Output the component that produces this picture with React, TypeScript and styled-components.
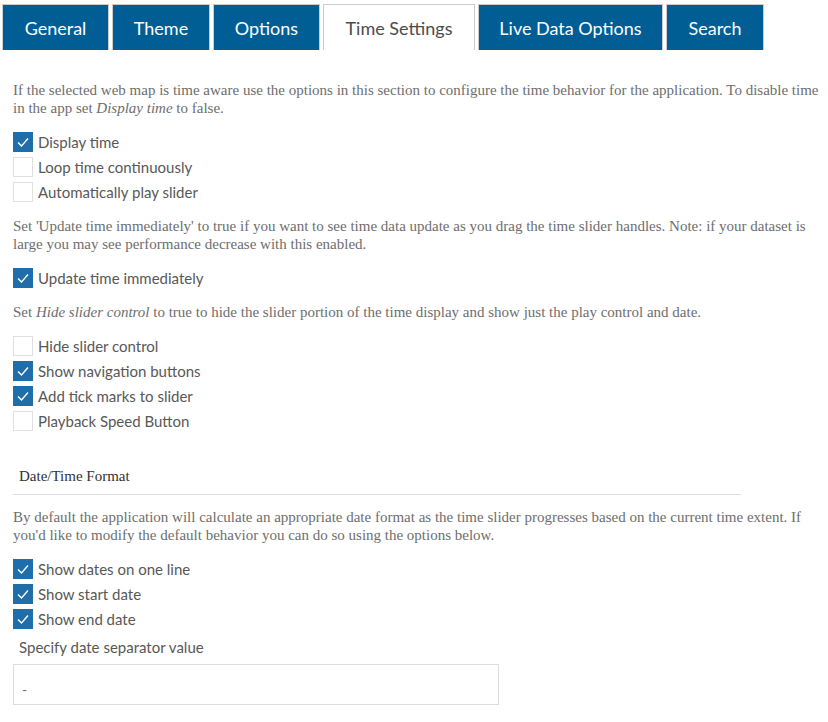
import styled, { createGlobalStyle } from 'styled-components'

const GlobalStyle = createGlobalStyle`
  body {
    margin: 0;
    background: #fff;
  }
`

const Page = styled.div`
  width: 828px;
  min-height: 722px;
  background: #fff;
`

const TabBar = styled.div`
  display: flex;
  gap: 3px;
  padding: 4px 0 0 2px;
  height: 46px;
`

const Tab = styled.div<{ $active?: boolean; $width: number }>`
  display: flex;
  align-items: center;
  justify-content: center;
  box-sizing: border-box;
  height: 46px;
  width: ${({ $width }) => $width}px;
  border: 1px solid #cccccc;
  border-bottom: none;
  background: ${({ $active }) => ($active ? '#ffffff' : '#005e95')};
  color: ${({ $active }) => ($active ? '#4c4c4c' : '#ffffff')};
  font-family: Lato, 'Open Sans', sans-serif;
  font-size: 18px;
  cursor: pointer;
`

const Content = styled.div`
  padding: 31px 2px 0 13px;
`

const Para = styled.p`
  margin: 0 0 15px 0;
  font-family: 'Liberation Serif', 'Times New Roman', serif;
  font-size: 15px;
  line-height: 18px;
  color: #6e6e6e;
`

const CheckList = styled.div`
  display: flex;
  flex-direction: column;
  gap: 5px;
  margin-bottom: 15px;
`

const CheckRow = styled.label`
  display: flex;
  align-items: center;
  gap: 5px;
  height: 20px;
  font-family: Lato, 'Open Sans', sans-serif;
  font-size: 15px;
  color: #585858;
`

const Box = styled.span<{ $checked: boolean }>`
  display: inline-flex;
  align-items: center;
  justify-content: center;
  box-sizing: border-box;
  width: 20px;
  height: 20px;
  flex: none;
  background: ${({ $checked }) => ($checked ? '#1f6ea9' : '#ffffff')};
  border: 1px solid ${({ $checked }) => ($checked ? '#1f6ea9' : '#e0e0e0')};
`

const SectionTitle = styled.div`
  margin-top: 36px;
  margin-bottom: 13px;
  padding: 0 0 9px 6px;
  width: 722px;
  font-family: 'Liberation Serif', 'Times New Roman', serif;
  font-size: 15px;
  line-height: 18px;
  color: #323232;
  border-bottom: 1px solid #dddddd;
`

const FieldLabel = styled.div`
  margin-top: -6px;
  padding-left: 6px;
  font-family: Lato, 'Open Sans', sans-serif;
  font-size: 15px;
  line-height: 18px;
  color: #585858;
`

const Input = styled.input`
  display: block;
  box-sizing: border-box;
  margin-top: 8px;
  width: 486px;
  height: 41px;
  padding: 10px 8px 0 8px;
  border: 1px solid #dddddd;
  font-family: Lato, 'Open Sans', sans-serif;
  font-size: 14px;
  color: #6e6e6e;
  outline: none;
`

const Check = ({ checked, label }: { checked: boolean; label: string }) => (
  <CheckRow>
    <Box $checked={checked}>
      {checked && (
        <svg width="14" height="14" viewBox="0 0 14 14">
          <polyline points="2,7.5 5.5,11 12,3.5" fill="none" stroke="#fff" strokeWidth="1.4" />
        </svg>
      )}
    </Box>
    {label}
  </CheckRow>
)

const tabs = [
  { name: 'General', width: 107 },
  { name: 'Theme', width: 98 },
  { name: 'Options', width: 107 },
  { name: 'Time Settings', width: 152, active: true },
  { name: 'Live Data Options', width: 185 },
  { name: 'Search', width: 98 },
]

export default function App() {
  return (
    <Page>
      <GlobalStyle />
      <TabBar>
        {tabs.map(t => (
          <Tab key={t.name} $active={t.active} $width={t.width}>
            {t.name}
          </Tab>
        ))}
      </TabBar>
      <Content>
        <Para>
          If the selected web map is time aware use the options in this section to configure the time behavior for the
          application. To disable time in the app set <i>Display time</i> to false.
        </Para>
        <CheckList>
          <Check checked label="Display time" />
          <Check checked={false} label="Loop time continuously" />
          <Check checked={false} label="Automatically play slider" />
        </CheckList>
        <Para>
          Set 'Update time immediately' to true if you want to see time data update as you drag the time slider handles.
          Note: if your dataset is large you may see performance decrease with this enabled.
        </Para>
        <CheckList>
          <Check checked label="Update time immediately" />
        </CheckList>
        <Para>
          Set <i>Hide slider control</i> to true to hide the slider portion of the time display and show just the play
          control and date.
        </Para>
        <CheckList>
          <Check checked={false} label="Hide slider control" />
          <Check checked label="Show navigation buttons" />
          <Check checked label="Add tick marks to slider" />
          <Check checked={false} label="Playback Speed Button" />
        </CheckList>
        <SectionTitle>Date/Time Format</SectionTitle>
        <Para>
          By default the application will calculate an appropriate date format as the time slider progresses based on
          the current time extent. If you'd like to modify the default behavior you can do so using the options below.
        </Para>
        <CheckList>
          <Check checked label="Show dates on one line" />
          <Check checked label="Show start date" />
          <Check checked label="Show end date" />
        </CheckList>
        <FieldLabel>Specify date separator value</FieldLabel>
        <Input defaultValue="-" />
      </Content>
    </Page>
  )
}
